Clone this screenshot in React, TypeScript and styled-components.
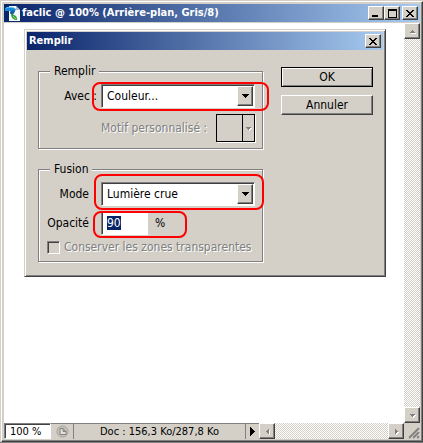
import React from "react";
import styled, { createGlobalStyle, css } from "styled-components";

const FACE = "#d4d0c8";
const GREY = "#808080";
const DARK = "#404040";

const Global = createGlobalStyle`
  * { box-sizing: border-box; }
  html, body { margin: 0; }
  body { background: ${FACE}; font-family: "DejaVu Sans Condensed", "DejaVu Sans", Tahoma, sans-serif; }
  button, select, input { font: inherit; color: #000; border-radius: 0; }
`;

const raised = css`
  border: 1px solid;
  border-color: #fff ${DARK} ${DARK} #fff;
  box-shadow: inset -1px -1px 0 ${GREY};
`;

const sunken = css`
  border: 1px solid;
  border-color: ${GREY} #fff #fff ${GREY};
  box-shadow: inset 1px 1px 0 ${DARK};
`;

const Window = styled.main`
  min-height: 100vh;
  display: flex;
  flex-direction: column;
  background: ${FACE};
  padding: 1px 0 0 1px;
  border-bottom: 1px solid ${GREY};
`;

const Frame = styled.div`
  flex: 1;
  display: flex;
  flex-direction: column;
  border: 1px solid;
  border-color: #fff ${DARK} ${DARK} #fff;
  box-shadow: inset -1px -1px 0 ${GREY};
  padding: 2px;
`;

const TitleBar = styled.header`
  height: 18px;
  display: flex;
  align-items: center;
  padding: 0 2px 0 1px;
  background: linear-gradient(90deg, #0a246a, #a6caf0);
  color: #fff;
`;

const Title = styled.h1`
  flex: 1;
  margin: 0 0 0 1px;
  font-size: 11px;
  line-height: 18px;
  font-weight: bold;
  white-space: nowrap;
`;

const Caption = styled.button<{ $gap?: boolean }>`
  width: 16px;
  height: 14px;
  padding: 0;
  margin-left: ${(p) => (p.$gap ? 2 : 0)}px;
  display: grid;
  place-items: center;
  background: ${FACE};
  ${raised}
`;

const Body = styled.div`
  flex: 1;
  display: grid;
  grid-template-columns: 1fr 16px;
  border-top: 1px solid ${FACE};
`;

const Canvas = styled.section`
  background: #fff;
  padding: 6px 18px 6px 20px;
`;

const track = css`
  background: repeating-conic-gradient(#fff 0 25%, ${FACE} 0 50%) 0 0 / 2px 2px;
`;

const VScroll = styled.div`
  display: flex;
  flex-direction: column;
  justify-content: space-between;
  ${track}
`;

const HScroll = styled.div`
  flex: 1;
  display: flex;
  justify-content: space-between;
  ${track}
`;

const Arrow = styled.button`
  width: 16px;
  height: 16px;
  padding: 0;
  display: grid;
  place-items: center;
  background: ${FACE};
  ${raised}
`;

const Status = styled.footer`
  height: 16px;
  display: flex;
  font-size: 11px;
  line-height: 15px;
`;

const Zoom = styled.input`
  width: 47px;
  padding: 0 0 0 5px;
  background: #fff;
  outline: 0;
  ${sunken}
`;

const StatusButton = styled.button<{ $width: number }>`
  width: ${(p) => p.$width}px;
  padding: 0;
  border: 0;
  border-top: 1px solid ${GREY};
  background: ${FACE};
  display: grid;
  place-items: center;
`;

const DocInfo = styled.div`
  width: 173px;
  border: solid ${GREY};
  border-width: 1px 1px 0 1px;
  text-align: center;
`;

const Dialog = styled.div`
  background: ${FACE};
  border: 1px solid;
  border-color: ${FACE} ${DARK} ${DARK} ${FACE};
  box-shadow: inset 1px 1px 0 #fff, inset -1px -1px 0 ${GREY};
  padding: 2px;
`;

const DialogBody = styled.form`
  display: flex;
  justify-content: space-between;
  align-items: flex-start;
  padding: 13px 10px 12px 11px;
  font-size: 12px;
  line-height: 16px;
`;

const Groups = styled.div`
  width: 225px;
  display: flex;
  flex-direction: column;
  gap: 12px;
`;

const Group = styled.fieldset`
  margin: 0;
  padding: 5px 7px 6px 8px;
  min-width: 0;
  border: 1px solid ${GREY};
  box-shadow: 1px 1px 0 #fff, inset 1px 1px 0 #fff;
`;

const Legend = styled.legend`
  margin-left: 3px;
  padding: 0 4px;
  background: ${FACE};
`;

const Row = styled.div<{ $gap?: number }>`
  display: flex;
  align-items: center;
  margin-top: ${(p) => p.$gap ?? 0}px;
`;

const Label = styled.label<{ $wide?: boolean }>`
  width: 54px;
  padding-right: ${(p) => (p.$wide ? 4 : 12)}px;
  text-align: right;
  white-space: nowrap;
`;

const Marked = styled.div<{ $grow?: boolean }>`
  position: relative;
  flex: ${(p) => (p.$grow ? 1 : "none")};
  display: flex;
  align-items: center;
`;

const Mark = styled.span<{ $inset: string }>`
  position: absolute;
  inset: ${(p) => p.$inset};
  border: 2px solid #f00;
  border-radius: 8px;
  pointer-events: none;
`;

const Select = styled.select`
  appearance: none;
  width: 100%;
  height: 24px;
  padding: 0 20px 0 5px;
  background: #fff;
  outline: 0;
  ${sunken}
`;

const DropButton = styled.span`
  position: absolute;
  right: 2px;
  top: 2px;
  bottom: 2px;
  width: 16px;
  display: grid;
  place-items: center;
  background: ${FACE};
  pointer-events: none;
  ${raised}
`;

const Disabled = styled.span`
  color: ${GREY};
  text-shadow: 1px 1px 0 #fff;
  white-space: nowrap;
`;

const Pattern = styled.button`
  width: 39px;
  height: 28px;
  margin-left: auto;
  padding: 0;
  display: grid;
  grid-template-columns: 1fr 12px;
  background: ${FACE};
  border: 1px solid #000;
  box-shadow: 1px 1px 0 #fff;
`;

const PatternArrow = styled.span`
  display: grid;
  place-items: center;
  border-left: 1px solid #000;
`;

const Amount = styled.input`
  width: 47px;
  height: 24px;
  padding: 0 0 0 5px;
  background: #fff;
  outline: 0;
  ${sunken}
  &::selection { background: #0a246a; color: #fff; }
`;

const Unit = styled.span`
  margin-left: 7px;
`;

const Check = styled.input`
  appearance: none;
  width: 13px;
  height: 13px;
  margin: 0 4px 0 0;
  background: ${FACE};
  ${sunken}
`;

const Actions = styled.div`
  width: 92px;
  margin-top: 4px;
  display: flex;
  flex-direction: column;
  gap: 8px;
`;

const Action = styled.button<{ $primary?: boolean }>`
  height: 20px;
  padding: 0;
  line-height: 16px;
  background: ${FACE};
  border: 1px solid;
  border-color: ${(p) => (p.$primary ? "#000" : `#fff ${DARK} ${DARK} #fff`)};
  box-shadow: ${(p) => (p.$primary ? "inset 1px 1px 0 #fff, " : "")}inset -1px -1px 0 ${GREY};
`;

const Close = () => (
  <svg width="8" height="7" shapeRendering="crispEdges">
    <path d="M0 0h2v1h1v1h2V1h1V0h2v1H7v1H6v1H5v1h1v1h1v1h1v1H6V6H5V5H3v1H2v1H0V6h1V5h1V4h1V3H2V2H1V1H0z" />
  </svg>
);

const arrows = {
  down: "M1 2h5v1H5v1H4v1H3V4H2V3H1z",
  up: "M3 2h1v1h1v1h1v1H1V4h1V3h1z",
  left: "M2 3h1V2h1V1h1v5H4V5H3V4H2z",
  right: "M2 1h1v1h1v1h1v1H4v1H3v1H2z",
};

const DropArrow = () => (
  <svg width="7" height="4" shapeRendering="crispEdges">
    <path d="M0 0h7v1H6v1H5v1H4v1H3V3H2V2H1V1H0z" />
  </svg>
);

const OffArrow = ({ dir }: { dir: keyof typeof arrows }) => (
  <svg width="7" height="7" shapeRendering="crispEdges">
    <path transform="translate(1 1)" d={arrows[dir]} fill="#fff" />
    <path d={arrows[dir]} fill={GREY} />
  </svg>
);

const AppIcon = () => (
  <svg width="16" height="16" viewBox="0 0 16 16">
    <path d="M4 1h7l4 4v11H4z" fill="#f4f8fa" />
    <path d="M11 1l4 4h-4z" fill="#a9bac4" />
    <path d="M0 3c3-1 6-1 9 0l2 1-2 4H6L5 6H0z" fill="#1489d8" />
    <path d="M1 3c3-1 5-1 8 0" stroke="#65c4f4" fill="none" />
    <path d="M5 7c2-2 4-2 5-1l-2 4c-2 0-3-1-3-3z" fill="#1b5fa0" />
    <path d="M6 9c2 1 4 1 5 2 1 1 1 3 1 4-3 0-6-2-6-6z" fill="#35a044" />
    <path d="M8 11l3 3" stroke="#9bd45a" />
  </svg>
);

export default function App() {
  const amount = React.useRef<HTMLInputElement>(null);
  React.useEffect(() => {
    amount.current?.focus();
    amount.current?.select();
  }, []);

  return (
    <>
      <Global />
      <Window>
        <Frame>
          <TitleBar>
            <AppIcon />
            <Title>faclic @ 100% (Arrière-plan, Gris/8)</Title>
            <Caption aria-label="Réduire">
              <svg width="8" height="8" shapeRendering="crispEdges"><path d="M0 6h6v2H0z" /></svg>
            </Caption>
            <Caption aria-label="Agrandir">
              <svg width="9" height="9" shapeRendering="crispEdges"><path fillRule="evenodd" d="M0 0h9v9H0zM1 2v6h7V2z" /></svg>
            </Caption>
            <Caption $gap aria-label="Fermer"><Close /></Caption>
          </TitleBar>
          <Body>
            <Canvas>
              <Dialog role="dialog" aria-labelledby="dialog-title">
                <TitleBar>
                  <Title as="h2" id="dialog-title">Remplir</Title>
                  <Caption aria-label="Fermer"><Close /></Caption>
                </TitleBar>
                <DialogBody onSubmit={(e) => e.preventDefault()}>
                  <Groups>
                    <Group>
                      <Legend>Remplir</Legend>
                      <Row>
                        <Label $wide htmlFor="fill">Avec :</Label>
                        <Marked $grow>
                          <Select id="fill"><option>Couleur...</option></Select>
                          <DropButton><DropArrow /></DropButton>
                          <Mark $inset="-2px -14px -3px -9px" />
                        </Marked>
                      </Row>
                      <Row $gap={6}>
                        <Label as="span" />
                        <Disabled id="pattern">Motif personnalisé :</Disabled>
                        <Pattern type="button" disabled aria-labelledby="pattern">
                          <span />
                          <PatternArrow><OffArrow dir="down" /></PatternArrow>
                        </Pattern>
                      </Row>
                    </Group>
                    <Group>
                      <Legend>Fusion</Legend>
                      <Row>
                        <Label htmlFor="mode">Mode</Label>
                        <Marked $grow>
                          <Select id="mode"><option>Lumière crue</option></Select>
                          <DropButton><DropArrow /></DropButton>
                          <Mark $inset="-8px -9px -4px -7px" />
                        </Marked>
                      </Row>
                      <Row $gap={5}>
                        <Label htmlFor="opacity">Opacité</Label>
                        <Marked>
                          <Amount ref={amount} id="opacity" defaultValue="90" />
                          <Unit>%</Unit>
                          <Mark $inset="0px -22px -3px -8px" />
                        </Marked>
                      </Row>
                      <Row $gap={4}>
                        <Check type="checkbox" id="keep" disabled />
                        <Disabled as="label" htmlFor="keep">Conserver les zones transparentes</Disabled>
                      </Row>
                    </Group>
                  </Groups>
                  <Actions>
                    <Action $primary>OK</Action>
                    <Action type="button">Annuler</Action>
                  </Actions>
                </DialogBody>
              </Dialog>
            </Canvas>
            <VScroll>
              <Arrow aria-label="Défiler vers le haut"><OffArrow dir="up" /></Arrow>
              <Arrow aria-label="Défiler vers le bas"><OffArrow dir="down" /></Arrow>
            </VScroll>
          </Body>
          <Status>
            <Zoom aria-label="Zoom" defaultValue="100 %" />
            <StatusButton $width={22} aria-label="Document">
              <svg width="13" height="13" viewBox="0 0 13 13">
                <circle cx="6.5" cy="6.5" r="5.5" fill="#c6c3bd" stroke="#a5a29c" />
                <path d="M4 3.500h3l3 3v3H4zM7 3.500v3h3" fill="#e4e1da" stroke="#808080" />
              </svg>
            </StatusButton>
            <DocInfo>Doc : 156,3 Ko/287,8 Ko</DocInfo>
            <StatusButton $width={13} aria-label="Options">
              <svg width="5" height="9" shapeRendering="crispEdges"><path d="M0 0h1v1h1v1h1v1h1v1h1v1H4v1H3v1H2v1H1v1H0z" /></svg>
            </StatusButton>
            <HScroll>
              <Arrow aria-label="Défiler à gauche"><OffArrow dir="left" /></Arrow>
              <Arrow aria-label="Défiler à droite"><OffArrow dir="right" /></Arrow>
            </HScroll>
            <svg width="16" height="16">
              <path d="M4 15L15 4M8 15l7-7M12 15l3-3" stroke="#fff" />
              <path d="M5 15L15 5M9 15l6-6M13 15l2-2" stroke="#808080" strokeWidth="2" />
            </svg>
          </Status>
        </Frame>
      </Window>
    </>
  );
}
